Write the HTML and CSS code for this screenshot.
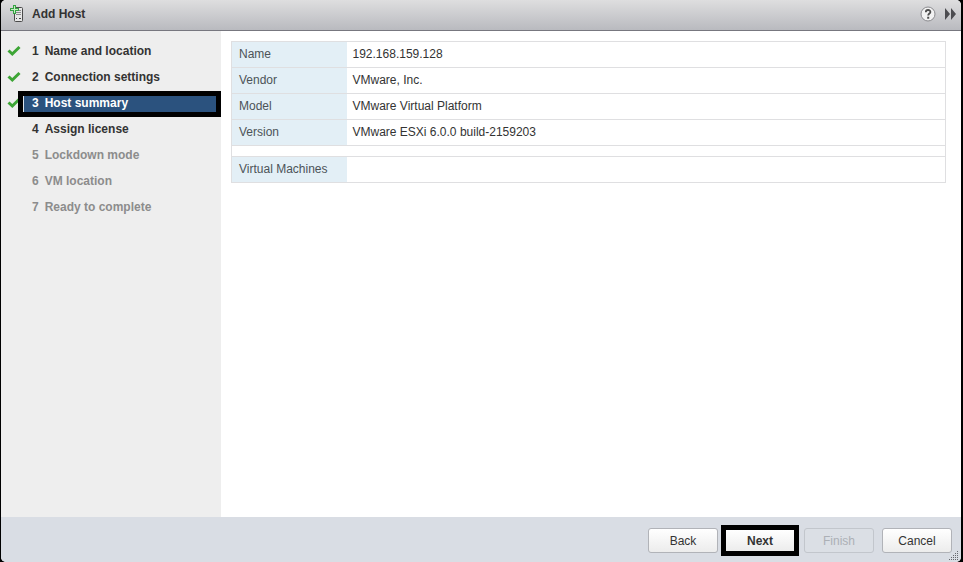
FILE: index.html
```html
<!DOCTYPE html>
<html lang="en">
<head>
<meta charset="utf-8">
<title>Add Host</title>
<link rel="stylesheet" href="styles.css">
</head>
<body>
<main class="dialog">
  <header class="titlebar">
    <svg class="host-icon" width="16" height="18" viewBox="0 0 16 18" aria-hidden="true">
      <rect x="5.5" y="2.5" width="8" height="14" rx="1" fill="#e6e6e6" stroke="#4a4a4a"/>
      <path d="M7 5.500h5M7 7.500h5M7 9.500h5" stroke="#8a8a8a"/>
      <path d="M7 13.500h1M10 13.500h2" stroke="#444"/>
      <path d="M4 0h3v3h3v3H7v3H4V6H1V3h3z" fill="#36a243"/>
      <path d="M5 1h1v3h3v1H6v3H5V5H2V4h3z" fill="#c3efc0"/>
    </svg>
    <h1 class="title">Add Host</h1>
    <button class="icon-button" type="button" aria-label="Help">
      <svg width="16" height="16" viewBox="0 0 16 16" aria-hidden="true">
        <circle cx="8" cy="8" r="7" fill="#f2f2f2" stroke="#8a8a8e"/>
        <path d="M5.800 6.200c0-3 4.600-2.800 4.600-.3 0 1.600-2.200 1.600-2.200 3.500" fill="none" stroke="#4c4c4c" stroke-width="1.800"/>
        <path d="M7.200 10.800h2v2h-2z" fill="#4c4c4c"/>
      </svg>
    </button>
    <button class="icon-button" type="button" aria-label="Expand">
      <svg width="12" height="12" viewBox="0 0 12 12" aria-hidden="true">
        <path d="M1 0l5 6-5 6zM7 0l5 6-5 6z" fill="#4c4c50"/>
      </svg>
    </button>
  </header>

  <div class="content">
    <nav class="sidebar" aria-label="Steps">
      <ol class="steps">
        <li class="step"><svg class="check" viewBox="0 0 14 12" aria-hidden="true"><path d="M1.500 5.500l3.800 3.500L12.500 2"/></svg><span class="label"><span>1</span><span>Name and location</span></span></li>
        <li class="step"><svg class="check" viewBox="0 0 14 12" aria-hidden="true"><path d="M1.500 5.500l3.800 3.500L12.500 2"/></svg><span class="label"><span>2</span><span>Connection settings</span></span></li>
        <li class="step current" aria-current="step"><svg class="check" viewBox="0 0 14 12" aria-hidden="true"><path d="M1.500 5.500l3.800 3.500L12.500 2"/></svg><span class="label"><span>3</span><span>Host summary</span></span></li>
        <li class="step"><span class="label"><span>4</span><span>Assign license</span></span></li>
        <li class="step pending"><span class="label"><span>5</span><span>Lockdown mode</span></span></li>
        <li class="step pending"><span class="label"><span>6</span><span>VM location</span></span></li>
        <li class="step pending"><span class="label"><span>7</span><span>Ready to complete</span></span></li>
      </ol>
    </nav>
    <section class="panel">
      <table class="summary">
        <tbody>
          <tr><th scope="row">Name</th><td>192.168.159.128</td></tr>
          <tr><th scope="row">Vendor</th><td>VMware, Inc.</td></tr>
          <tr><th scope="row">Model</th><td>VMware Virtual Platform</td></tr>
          <tr><th scope="row">Version</th><td>VMware ESXi 6.0.0 build-2159203</td></tr>
          <tr class="spacer"><td colspan="2"></td></tr>
          <tr><th scope="row">Virtual Machines</th><td></td></tr>
        </tbody>
      </table>
    </section>
  </div>

  <footer class="actions">
    <button class="button" type="button">Back</button>
    <button class="button primary" type="button">Next</button>
    <button class="button" type="button" disabled>Finish</button>
    <button class="button" type="button">Cancel</button>
    <svg class="grip" width="10" height="10" viewBox="0 0 10 10" aria-hidden="true">
      <path d="M8 1.500h1M6 3.500h1M8 3.500h1M4 5.500h1M6 5.500h1M8 5.500h1M2 7.500h1M4 7.500h1M6 7.500h1M8 7.500h1M0 9.500h1M2 9.500h1M4 9.500h1M6 9.500h1M8 9.500h1" stroke="#66686e"/>
    </svg>
  </footer>
</main>
</body>
</html>
```

FILE: styles.css
```css
* {
  box-sizing: border-box;
}

body {
  margin: 0;
  background: #000;
  color: #333;
  font: 12px/16px "Liberation Sans", Arial, sans-serif;
}

.dialog {
  display: flex;
  flex-direction: column;
  min-height: 100vh;
  margin: 0 2px 0 1px;
  border-radius: 5px;
  overflow: hidden;
  background: #fff;
}

.titlebar {
  display: flex;
  align-items: center;
  height: 31px;
  padding: 0 5px 2px 8px;
  border-bottom: 1px solid #77777f;
  background: linear-gradient(#dededf, #b9babf);
}

.host-icon {
  flex: none;
  margin-right: 7px;
}

.title {
  flex: 1;
  margin: 0;
  font-size: 12px;
}

.icon-button {
  display: flex;
  margin-left: 8px;
  padding: 0;
  border: 0;
  background: none;
}

.content {
  display: flex;
  flex: 1;
}

.sidebar {
  flex: none;
  width: 220px;
  background: #eee;
}

.steps {
  margin: 0;
  padding: 8px 0;
  list-style: none;
}

.step {
  position: relative;
  padding: 0 0 0 17px;
  font-weight: bold;
}

.label {
  display: flex;
  gap: 6px;
  height: 26px;
  padding: 4px 14px;
}

.check {
  position: absolute;
  top: 6px;
  left: 6px;
  width: 14px;
  height: 12px;
  fill: none;
  stroke: #3da535;
  stroke-width: 3;
}

.current .label {
  position: relative;
  padding: 0 9px;
  border: 5px solid #000;
  background: #2b527e;
  box-shadow: inset 1px 0 #dfe5ec;
  color: #fff;
  line-height: 14px;
}

.pending {
  color: #8c8c8c;
}

.panel {
  flex: 1;
  min-width: 0;
  padding: 10px 15px 10px 10px;
}

.summary {
  width: 100%;
  border: 1px solid #dfdfe1;
  border-collapse: collapse;
}

.summary th,
.summary td {
  height: 26px;
  padding: 0 6px 2px;
  border-top: 1px solid #dfdfe1;
  text-align: left;
}

.summary th {
  width: 115px;
  padding-left: 7px;
  background: #e3eff6;
  color: #4c5358;
  font-weight: normal;
}

.summary .spacer td {
  height: 11px;
  padding: 0;
}

.actions {
  position: relative;
  display: flex;
  align-items: center;
  justify-content: flex-end;
  gap: 8px;
  height: 45px;
  padding: 2px 9px 0;
  background: #d9dde4;
}

.button {
  width: 70px;
  height: 25px;
  padding: 0;
  border: 1px solid #b1b3b8;
  border-radius: 3px;
  background: linear-gradient(#fff, #ececec);
  color: #333;
  font: inherit;
}

.button:disabled {
  border-color: #c2c6cc;
  background: #dbdfe5;
  color: #acb0b6;
}

.primary {
  width: 78px;
  height: 31px;
  margin: 0 -3px 0 -5px;
  border: 5px solid #000;
  border-radius: 0;
  font-weight: bold;
}

.grip {
  position: absolute;
  right: 2px;
  bottom: 2px;
}
```
